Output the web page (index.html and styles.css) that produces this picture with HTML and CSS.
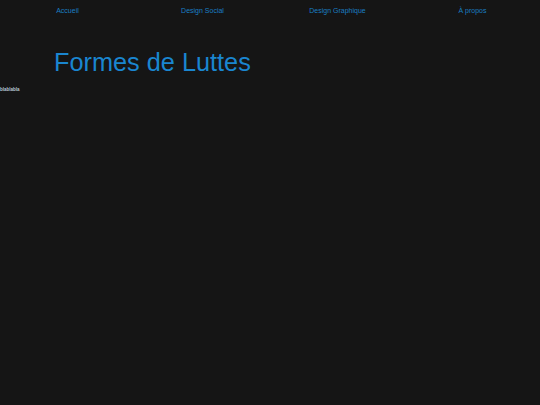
FILE: index.html
```html
<!DOCTYPE html>
<html lang="fr">
<head>
<meta charset="utf-8">
<title>Formes de Luttes</title>
<link rel="stylesheet" href="styles.css">
</head>
<body>
<nav class="nav">
  <a class="nav-link" href="#">Accueil</a>
  <a class="nav-link" href="#">Design Social</a>
  <a class="nav-link" href="#">Design Graphique</a>
  <a class="nav-link" href="#">À propos</a>
</nav>
<h1 class="title">Formes de Luttes</h1>
<p class="note">blablabla</p>
</body>
</html>
```
FILE: styles.css
```css
html, body {
  margin: 0;
  padding: 0;
  background: #151515;
  font-family: "Liberation Sans", Arial, sans-serif;
  height: 100%;
}
.nav {
  display: grid;
  grid-template-columns: repeat(4, 1fr);
  padding-top: 6px;
}
.nav-link {
  text-align: center;
  color: #1a7fc4;
  font-size: 7px;
  line-height: 9px;
  text-decoration: none;
}
.title {
  margin: 32px 0 0 54px;
  font-weight: normal;
  font-size: 25.3px;
  line-height: 30px;
  color: #1a86d0;
}
.note {
  margin: 10px 0 0 0;
  font-size: 4.5px;
  line-height: 5px;
  font-weight: bold;
  color: #b8c8d8;
}
```
